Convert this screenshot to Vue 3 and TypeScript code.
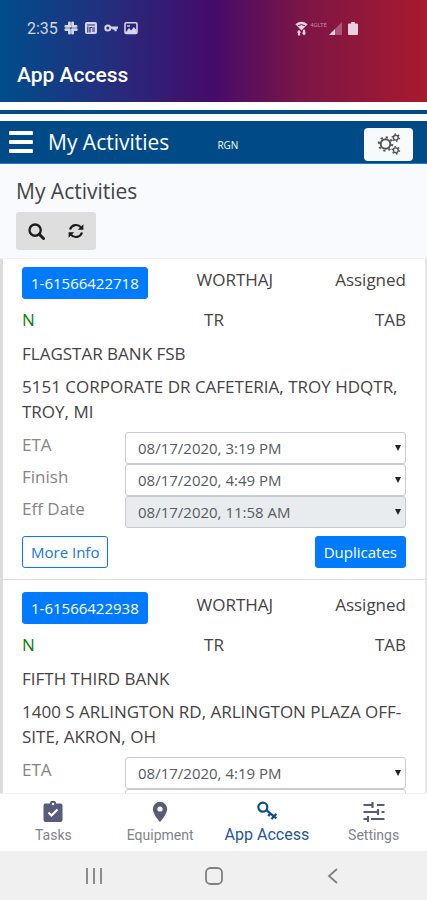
<script setup lang="ts">
interface DateField {
  label?: string
  value?: string
  disabled?: boolean
}

interface Activity {
  id: string
  owner: string
  status: string
  flag: string
  code: string
  group: string
  customer: string
  address: string
  dates: DateField[]
  actions: string[]
}

const activities: Activity[] = [
  {
    id: '1-61566422718',
    owner: 'WORTHAJ',
    status: 'Assigned',
    flag: 'N',
    code: 'TR',
    group: 'TAB',
    customer: 'FLAGSTAR BANK FSB',
    address: '5151 CORPORATE DR CAFETERIA, TROY HDQTR, TROY, MI',
    dates: [
      { label: 'ETA', value: '08/17/2020, 3:19 PM' },
      { label: 'Finish', value: '08/17/2020, 4:49 PM' },
      { label: 'Eff Date', value: '08/17/2020, 11:58 AM', disabled: true },
    ],
    actions: ['More Info', 'Duplicates'],
  },
  {
    id: '1-61566422938',
    owner: 'WORTHAJ',
    status: 'Assigned',
    flag: 'N',
    code: 'TR',
    group: 'TAB',
    customer: 'FIFTH THIRD BANK',
    address: '1400 S ARLINGTON RD, ARLINGTON PLAZA OFF-SITE, AKRON, OH',
    dates: [{ label: 'ETA', value: '08/17/2020, 4:19 PM' }, {}],
    actions: [],
  },
]
</script>

<template>
  <div class="screen">
    <header class="app-header">
      <div class="status">
        <span class="clock">2:35</span>
        <svg width="14" height="14" viewBox="0 0 14 14" fill="none" stroke="currentColor" stroke-width="2.8" stroke-linecap="round">
          <path d="M5.4 1.8v2.4M1.8 5.3h4M8.6 1.8v3.6M9 5.3h3.2M1.8 8.7h3.4M5.4 8.8v3.4M8.6 9.8v2.4M8.4 8.7h4" />
        </svg>
        <svg width="14" height="14" viewBox="0 0 14 14">
          <rect x="1" y="1" width="12" height="12" rx="2" fill="currentColor" />
          <path d="M3 4h8" stroke="#29307c" stroke-width="1" />
          <path d="M3.800 5.500v6M6 6v5.500M6 6.500h2" stroke="#29307c" stroke-width="1.200" />
          <path d="M8 6h3v5H8z" fill="#7b7cb0" />
        </svg>
        <svg width="14" height="14" viewBox="0 0 14 14" fill="none" stroke="currentColor">
          <circle cx="3.800" cy="7" r="2.500" stroke-width="2" />
          <path d="M6 6.700h8M11.600 6.700v3.600M9.600 6.700v2" stroke-width="2.200" />
        </svg>
        <svg width="14" height="14" viewBox="0 0 14 14">
          <rect x="1" y="1.800" width="12" height="10.600" rx="1.200" fill="none" stroke="currentColor" stroke-width="1.600" />
          <path d="M2 11l3-4 2.200 2.400L9.800 6 12.400 9v3H2z" fill="currentColor" />
          <path d="M3 5h3" stroke="currentColor" stroke-width="1.400" />
        </svg>
        <span class="signals">
          <svg width="13" height="15" viewBox="0 0 13 15" fill="currentColor">
            <path d="M.4 3.200Q6.500-1.600 12.600 3.200L6.500 9.600z" />
            <path d="M3 4.800Q6.500 2.400 10 4.800" fill="none" stroke="#73154f" stroke-width="1" />
            <path d="M4 8.800l2.200 2.800H5.100v3H2.900v-3H1.800zM9 14.600l2.200-2.800h-1.100v-3H7.900v3H6.800z" />
          </svg>
          <span class="network">4GLTE</span>
          <svg width="13" height="13" viewBox="0 0 13 13" fill="currentColor">
            <path d="M0 13L13 0v13z" opacity=".35" />
            <path d="M0 13l6-6v6z" />
          </svg>
          <svg class="battery" width="10" height="13" viewBox="0 0 10 13" fill="currentColor">
            <path d="M3.200 0h3.600v1.600H9q1 0 1 1V12q0 1-1 1H1q-1 0-1-1V2.600q0-1 1-1h2.200z" />
          </svg>
        </span>
      </div>
      <h1 class="app-title">App Access</h1>
    </header>

    <div class="stripe"></div>

    <nav class="navbar">
      <button class="menu" type="button" aria-label="Menu"><i></i><i></i><i></i></button>
      <span class="nav-title">My Activities</span>
      <span class="region">RGN</span>
      <button class="gears" type="button" aria-label="Options">
        <svg width="24" height="22" viewBox="0 0 24 22" fill="none" stroke="#555">
          <circle cx="8.500" cy="11" r="4.800" stroke-width="2" />
          <circle cx="8.500" cy="11" r="6.700" stroke-width="2" stroke-dasharray="2.200 3.060" />
          <circle cx="18.800" cy="4.700" r="2.400" stroke-width="1.400" />
          <circle cx="18.800" cy="4.700" r="3.600" stroke-width="1.500" stroke-dasharray="1.500 2.270" />
          <circle cx="18.800" cy="17.300" r="2.400" stroke-width="1.400" />
          <circle cx="18.800" cy="17.300" r="3.600" stroke-width="1.500" stroke-dasharray="1.500 2.270" />
        </svg>
      </button>
    </nav>

    <section class="tools">
      <h2 class="page-title">My Activities</h2>
      <div class="tool-group">
        <button type="button" aria-label="Search">
          <svg width="17" height="17" viewBox="0 0 16 16" fill="none" stroke="#1c1c1c">
            <circle cx="6.700" cy="6.700" r="5.300" stroke-width="2.200" />
            <path d="M10.600 10.600l4 4" stroke-width="2.800" stroke-linecap="round" />
          </svg>
        </button>
        <button type="button" aria-label="Refresh">
          <svg width="16" height="16" viewBox="0 0 16 16">
            <path d="M2 6.500C3.600 1.400 10 .6 13 4.400M14 9.500C12.400 14.600 6 15.400 3 11.600" fill="none" stroke="#1c1c1c" stroke-width="2.200" />
            <path d="M15.400 1.200v5.600H9.800zM.6 14.800V9.200h5.600z" fill="#1c1c1c" />
          </svg>
        </button>
      </div>
    </section>

    <main class="list">
      <article v-for="(item, n) in activities" :key="item.id" class="card">
        <div class="row">
          <div><button type="button" class="btn solid">{{ item.id }}</button></div>
          <span class="mid">{{ item.owner }}</span>
          <span class="end">{{ item.status }}</span>
        </div>
        <div class="row second">
          <span class="flag">{{ item.flag }}</span>
          <span class="mid">{{ item.code }}</span>
          <span class="end">{{ item.group }}</span>
        </div>
        <p class="text">{{ item.customer }}</p>
        <p class="text">{{ item.address }}</p>
        <div class="fields">
          <div v-for="(d, i) in item.dates" :key="i" class="field">
            <label :for="`date-${n}-${i}`">{{ d.label }}</label>
            <div class="picker">
              <select :id="`date-${n}-${i}`" :disabled="d.disabled">
                <option v-if="d.value">{{ d.value }}</option>
              </select>
              <svg class="caret" width="6" height="6" viewBox="0 0 6 6"><path d="M0 0h6L3 6z" fill="#222" /></svg>
            </div>
          </div>
        </div>
        <div v-if="item.actions.length" class="actions">
          <button
            v-for="(action, i) in item.actions"
            :key="action"
            type="button"
            class="btn"
            :class="i === 0 ? 'outline' : 'solid'"
          >{{ action }}</button>
        </div>
      </article>
    </main>

    <nav class="tabs">
      <a href="#tasks">
        <svg width="20" height="22" viewBox="0 0 20 22">
          <path d="M2.500 2.500H7a3 3 0 0 1 6 0h4.500q2 0 2 2V19q0 2-2 2h-15q-2 0-2-2V4.500q0-2 2-2z" fill="#575c78" />
          <circle cx="10" cy="3" r="1.200" fill="#fff" />
          <path d="M5.500 11.500l3 3 6-6" fill="none" stroke="#fff" stroke-width="2.200" />
        </svg>
        <span>Tasks</span>
      </a>
      <a href="#equipment">
        <svg width="16" height="22" viewBox="0 0 16 22">
          <path d="M8 .8a7.200 7.200 0 0 0-7.200 7.200C.8 13.300 8 21 8 21s7.200-7.700 7.200-13A7.200 7.200 0 0 0 8 .8z" fill="#575c78" />
          <circle cx="8" cy="8" r="2.600" fill="#fff" />
        </svg>
        <span>Equipment</span>
      </a>
      <a href="#access" class="active">
        <svg width="22" height="22" viewBox="0 0 22 22" fill="none" stroke="#134a8e">
          <circle cx="6.800" cy="6.200" r="4.500" stroke-width="2.200" />
          <path d="M10.300 9.200l10 8.200M14.300 12.500l-2 2.600M17.800 15.200l-2.200 3M20.300 12.800l-2.500 3" stroke-width="2.200" />
        </svg>
        <span>App Access</span>
      </a>
      <a href="#settings">
        <svg width="22" height="22" viewBox="0 0 22 22" fill="none" stroke="#575c78" stroke-width="2">
          <path d="M.5 4H10M14 4h7.500M.5 11h14M18.500 11h3M8 18h13.500M.5 18H5" />
          <path d="M9.500 1v6M15 8v6M5 15v6" stroke-width="2.200" />
        </svg>
        <span>Settings</span>
      </a>
    </nav>

    <div class="system">
      <button type="button" aria-label="Recents">
        <svg width="18" height="18" viewBox="0 0 18 18" stroke="#808080" stroke-width="1.800"><path d="M2 1v16M9 1v16M16 1v16" /></svg>
      </button>
      <button type="button" aria-label="Home">
        <svg width="18" height="18" viewBox="0 0 18 18" fill="none" stroke="#808080" stroke-width="1.800"><rect x="1" y="1" width="16" height="16" rx="4.500" /></svg>
      </button>
      <button type="button" aria-label="Back">
        <svg width="18" height="18" viewBox="0 0 18 18" fill="none" stroke="#808080" stroke-width="1.800"><path d="M13 2L5 9l8 7" /></svg>
      </button>
    </div>
  </div>
</template>

<style>
body {
  background: #fff;
}
</style>

<style scoped>
* {
  box-sizing: border-box;
}

.screen {
  display: flex;
  flex-direction: column;
  height: 100vh;
  overflow: hidden;
  font-family: 'Open Sans', 'Noto Sans', sans-serif;
  font-size: 17px;
  color: #444;
}

button {
  font: inherit;
  border: 0;
  padding: 0;
  background: none;
}

svg {
  display: block;
  flex: none;
}

h1, h2, p {
  margin: 0;
  font-weight: 400;
}

.app-header {
  padding: 18px 17px 15px;
  font-family: Roboto, sans-serif;
  color: #fff;
  background: linear-gradient(90deg, #004d8b 0%, #1f327f 22%, #450b6b 50%, #7a1547 70%, #a91a2d 100%);
}

.status {
  display: flex;
  align-items: center;
  gap: 6px;
  height: 20px;
  padding-left: 10px;
  font-size: 16px;
  color: #d5d5ec;
}

.signals {
  display: flex;
  align-items: center;
  gap: 2px;
  margin-left: auto;
  padding-right: 52px;
  color: #eccfe0;
}

.network {
  align-self: flex-start;
  font-size: 6px;
  line-height: 8px;
  opacity: 0.6;
}

.battery {
  margin-left: 4px;
}

.app-title {
  margin-top: 25px;
  font-size: 21px;
  font-weight: 500;
  line-height: 24px;
}

.stripe {
  flex: none;
  height: 19px;
  border: solid #fff;
  border-width: 8px 0 7px;
  background: #004b87;
}

.navbar {
  display: flex;
  flex: none;
  align-items: center;
  height: 43px;
  padding: 0 14px 0 9px;
  color: #fff;
  background: #004b87;
  border-bottom: 1px solid #1c7cc7;
}

.menu {
  display: flex;
  flex-direction: column;
  gap: 5px;
  width: 24px;
}

.menu i {
  height: 4px;
  border-radius: 1px;
  background: #fff;
}

.nav-title {
  margin-left: 15px;
  font-size: 21px;
}

.region {
  margin: 6px 0 0 48px;
  font-size: 10px;
}

.gears {
  display: flex;
  align-items: center;
  justify-content: center;
  width: 49px;
  height: 33px;
  margin: 4px 0 0 auto;
  border-radius: 4px;
  background: #f8f9fa;
}

.tools {
  flex: none;
  padding: 12px 16px 8px;
  background: #f8fafd;
  border-bottom: 1px solid #eef0f2;
}

.page-title {
  font-size: 21px;
  line-height: 30px;
}

.tool-group {
  display: inline-flex;
  height: 38px;
  margin-top: 6px;
  vertical-align: top;
  border-radius: 3px;
  background: #dedede;
}

.tool-group button {
  display: flex;
  align-items: center;
  justify-content: center;
  width: 40px;
}

.list {
  flex: 1;
  min-height: 0;
  overflow: hidden;
  border-left: 3px solid #dcdcdc;
  border-right: 2px solid #e6e6e6;
}

.card {
  padding: 12px 19px 11px;
  border-bottom: 1px solid #dcdcdc;
}

.card:first-child {
  padding-top: 8px;
}

.row {
  display: grid;
  grid-template-columns: minmax(84px, auto) 1fr 84px;
  line-height: 26px;
}

.second {
  margin-top: 8px;
}

.mid {
  text-align: center;
}

.end {
  text-align: right;
}

.flag {
  color: #0a800a;
}

.text {
  margin-top: 8px;
  line-height: 25px;
}

.btn {
  display: block;
  height: 32px;
  padding: 0 8px;
  border: 1px solid #007bff;
  border-radius: 3px;
  font-size: 15px;
  line-height: 28px;
}

.solid {
  color: #fff;
  background: #007bff;
}

.outline {
  color: #1677e8;
  background: #fff;
}

.fields {
  margin-top: 8px;
}

.field {
  display: grid;
  grid-template-columns: 103px 1fr;
  height: 32px;
}

.field label {
  line-height: 26px;
  color: #858585;
}

.picker {
  position: relative;
}

.picker select {
  display: block;
  width: 100%;
  height: 32px;
  padding: 0 12px;
  border: 1px solid #c8ccd0;
  border-radius: 3px;
  appearance: none;
  font: inherit;
  font-size: 15px;
  color: #555b61;
  background: #fff;
  opacity: 1;
}

.picker select:disabled {
  background: #e9ecef;
}

.caret {
  position: absolute;
  top: 13px;
  right: 5px;
}

.actions {
  display: flex;
  justify-content: space-between;
  margin-top: 8px;
}

.tabs {
  display: grid;
  flex: none;
  grid-template-columns: repeat(4, 1fr);
  height: 58px;
  padding-top: 7px;
  border-top: 1px solid #f0f0f0;
  background: #fff;
  font-family: Roboto, sans-serif;
  font-size: 14px;
}

.tabs a {
  display: flex;
  flex-direction: column;
  align-items: center;
  gap: 2px;
  line-height: 20px;
  color: #80838a;
  text-decoration: none;
}

.tabs .active {
  font-size: 16px;
  color: #1d5797;
}

.system {
  display: flex;
  flex: none;
  justify-content: space-between;
  height: 49px;
  padding: 0 85px;
  background: #f0f0f0;
}
</style>
